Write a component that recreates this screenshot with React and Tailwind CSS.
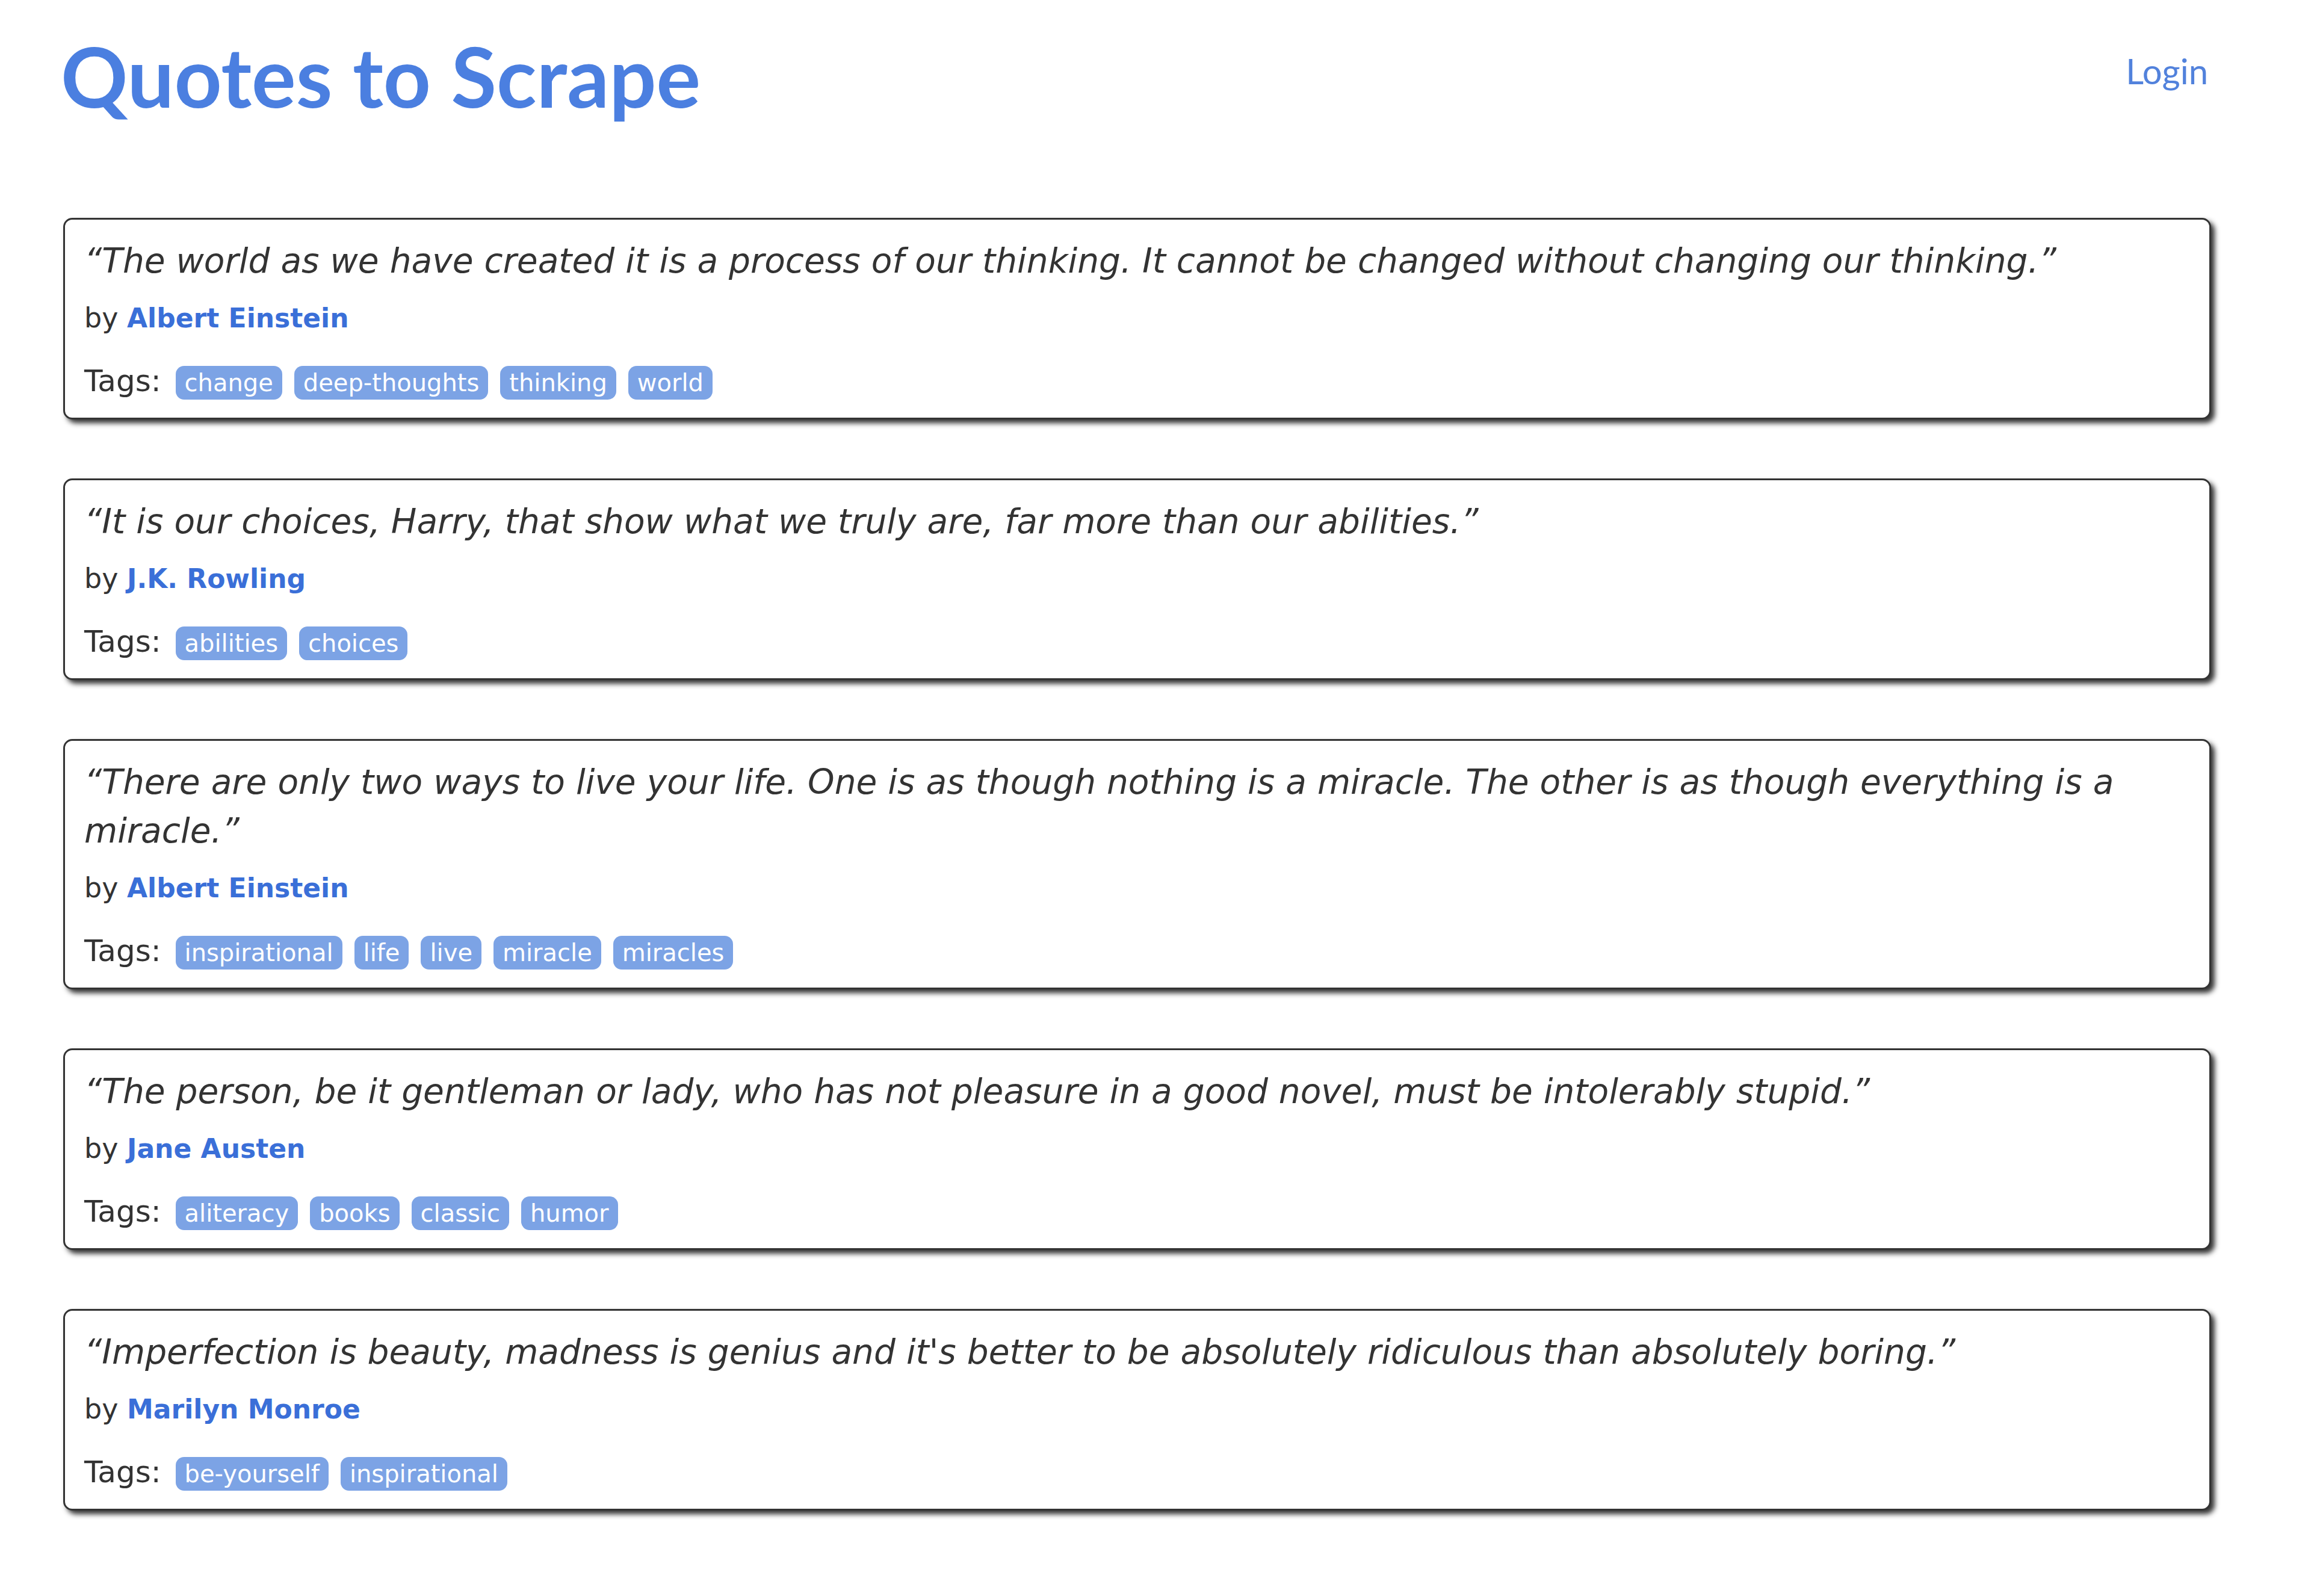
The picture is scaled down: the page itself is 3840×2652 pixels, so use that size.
import React from 'react';

const quotes = [
  {
    text: '“The world as we have created it is a process of our thinking. It cannot be changed without changing our thinking.”',
    author: 'Albert Einstein',
    tags: ['change', 'deep-thoughts', 'thinking', 'world'],
  },
  {
    text: '“It is our choices, Harry, that show what we truly are, far more than our abilities.”',
    author: 'J.K. Rowling',
    tags: ['abilities', 'choices'],
  },
  {
    text: '“There are only two ways to live your life. One is as though nothing is a miracle. The other is as though everything is a miracle.”',
    author: 'Albert Einstein',
    tags: ['inspirational', 'life', 'live', 'miracle', 'miracles'],
  },
  {
    text: '“The person, be it gentleman or lady, who has not pleasure in a good novel, must be intolerably stupid.”',
    author: 'Jane Austen',
    tags: ['aliteracy', 'books', 'classic', 'humor'],
  },
  {
    text: "“Imperfection is beauty, madness is genius and it's better to be absolutely ridiculous than absolutely boring.”",
    author: 'Marilyn Monroe',
    tags: ['be-yourself', 'inspirational'],
  },
];

const Quote = ({ quote }) => (
  <div className="bg-white border-[3px] border-[#333333] rounded-[15px] shadow-[6px_6px_9px_#333333] px-[32px] pt-[28px] pb-[29px]">
    <p className="text-[56.6px] leading-[81px] italic text-[#333333] mb-[23px]">{quote.text}</p>
    <p className="text-[46px] leading-[63px] text-[#333333]">
      by <a href="#" className="text-[44px] font-bold text-[#3a6fd8]">{quote.author}</a>
    </p>
    <div className="mt-[42px] flex items-baseline gap-[20px] text-[44px] leading-[63px] text-[#333333]">
      <span className="text-[50px] mr-[4px]">Tags:</span>
      {quote.tags.map((tag) => (
        <a key={tag} href="#" className="bg-[#7ca3e5] text-white text-[40px] leading-none px-[15px] py-[8px] rounded-[14px]">
          {tag}
        </a>
      ))}
    </div>
  </div>
);

export default function App() {
  return (
    <div className="min-h-screen bg-white font-['DejaVu_Sans',Verdana,sans-serif] pl-[105px] pr-[166px] pb-[139px]">
      {/* header */}
      <div className="flex justify-between items-start">
        <h1 className="mt-[57px] -ml-[4px] text-[138px] leading-none font-bold text-[#4b7fe0] font-['Lato',sans-serif]">
          <a href="#">Quotes to Scrape</a>
        </h1>
        <a href="#" className="mt-[89px] mr-[5px] text-[58px] leading-none text-[#5282dc] font-['Lato',sans-serif]">
          Login
        </a>
      </div>

      {/* quotes */}
      <div className="mt-[167px] flex flex-col gap-[98px]">
        {quotes.map((q, i) => (
          <Quote key={i} quote={q} />
        ))}
      </div>
    </div>
  );
}
